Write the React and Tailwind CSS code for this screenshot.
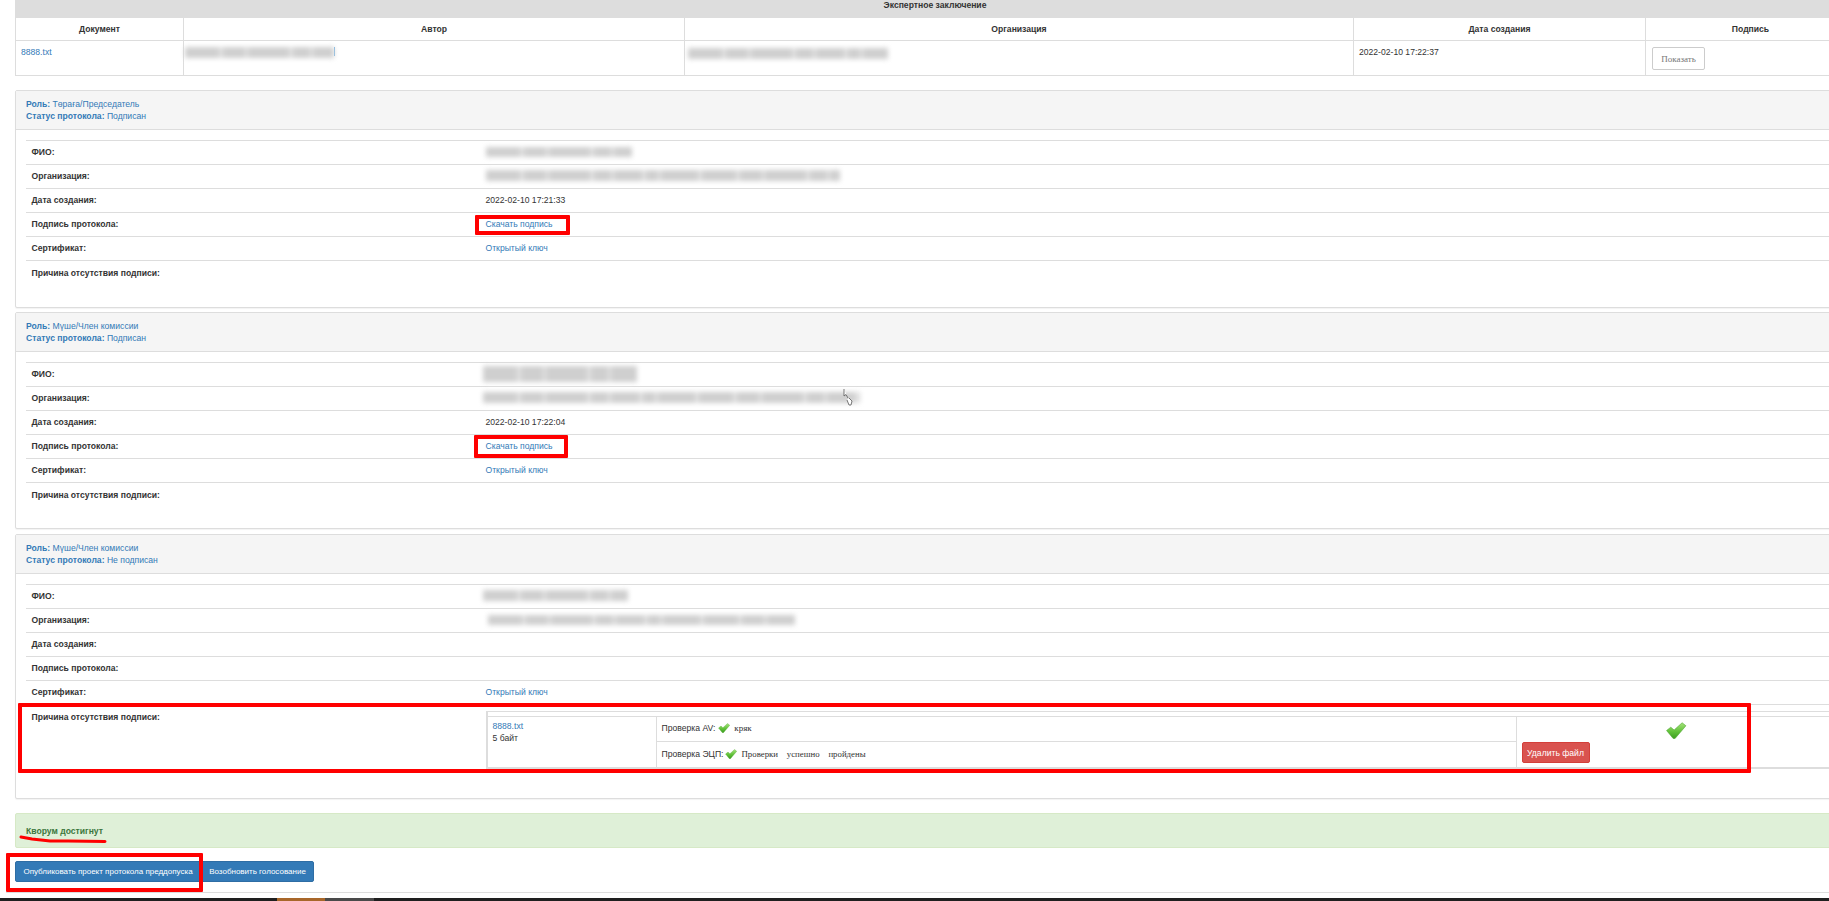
const F = "font-['Liberation_Sans',Arial,sans-serif]";
const S = "font-['Liberation_Serif','Times_New_Roman',serif]";

function Blur({ w, h = 10, className = "" }) {
  const segs = [];
  let left = w, i = 0;
  const pattern = [34, 4, 22, 3, 41, 4, 17, 3, 28, 4, 12, 3, 37, 4];
  while (left > 0) {
    const s = Math.min(pattern[i % pattern.length], left);
    segs.push(s);
    left -= s;
    i++;
  }
  return (
    <div className={"flex overflow-visible blur-[2.4px] " + className} style={{ width: w, height: h }}>
      {segs.map((s, k) => (
        <div key={k} className={k % 2 ? "h-full bg-[#e2e2e2]" : "h-full bg-[#cfcfcf]"} style={{ width: s }} />
      ))}
    </div>
  );
}

function Check({ className = "w-[12px] h-[10px]" }) {
  return (
    <svg viewBox="0 0 22 18" className={className}>
      <defs>
        <linearGradient id="chk" x1="0" y1="0" x2="0" y2="1">
          <stop offset="0" stopColor="#a6e27c" />
          <stop offset="0.55" stopColor="#62c23a" />
          <stop offset="1" stopColor="#3d9e22" />
        </linearGradient>
      </defs>
      <path d="M1 9 L5.5 5.5 L9 8.5 L17.5 0.8 L21.5 4 L10 17.5 L8 17.5 Z" fill="url(#chk)" stroke="#4aa52c" strokeWidth="0.6" strokeLinejoin="round" />
    </svg>
  );
}

function Red({ className }) {
  return <div className={"absolute border-[4px] border-[#f00] rounded-[1px] pointer-events-none " + className} />;
}

function Row({ label, children }) {
  return (
    <div className="grid grid-cols-[454px_1fr] px-[5.5px] pb-[2px] border-t border-[#ddd] h-[24px] items-center">
      <div className="font-bold text-[#333]">{label}</div>
      <div>{children}</div>
    </div>
  );
}

function Panel({ role, status, heightClass, fio, org, date, sign, last }) {
  return (
    <div className={"border border-[#ddd] rounded-[2px] bg-white shadow-[0_1px_1px_rgba(0,0,0,0.05)] " + heightClass}>
      <div className="h-[39px] bg-[#f5f5f5] border-b border-[#ddd] px-[10px] pt-[7px] leading-[12px] text-[#337ab7]">
        <div><span className="font-bold">Роль:</span> {role}</div>
        <div><span className="font-bold">Статус протокола:</span> {status}</div>
      </div>
      <div className="pl-[10px] pt-[10px]">
        <Row label="ФИО:">{fio}</Row>
        <Row label="Организация:">{org}</Row>
        <Row label="Дата создания:"><span className="text-[#333]">{date}</span></Row>
        <Row label="Подпись протокола:">{sign && <a className="text-[#337ab7]">Скачать подпись</a>}</Row>
        <Row label="Сертификат:"><a className="text-[#337ab7]">Открытый ключ</a></Row>
        <div className="grid grid-cols-[454px_1fr] px-[5.5px] border-t border-[#ddd] pt-[6px]">
          <div className="font-bold text-[#333] leading-[12px]">Причина отсутствия подписи:</div>
          <div className="-mt-[6px] pt-[7px]">{last}</div>
        </div>
      </div>
    </div>
  );
}

function FileTable() {
  return (
    <div className="-mt-[1px] border-t border-[#ddd]">
      <div className="h-[5px] border-b border-[#ddd] border-l-2" />
      <div className="grid grid-cols-[169px_860px_1fr] h-[52px] border-l-2 border-b-2 border-[#ddd]">
        <div className="border-r border-[#ddd] pl-[5px] pt-[3px] leading-[12px]">
          <a className="text-[#337ab7] block">8888.txt</a>
          <div className="text-[#333]">5 байт</div>
        </div>
        <div className="border-r border-[#ddd] text-[#333]">
          <div className="h-[25px] border-b border-[#ddd] flex items-center pl-[5px] pb-[3px]">
            <span>Проверка AV:</span>
            <Check className="w-[12px] h-[10px] ml-[3px]" />
            <span className={S + " ml-[4px] text-[9px]"}>кряк</span>
          </div>
          <div className="h-[26px] flex items-center pl-[5px] pb-[2px]">
            <span>Проверка ЭЦП:</span>
            <Check className="w-[12px] h-[10px] ml-[2px]" />
            <span className={S + " ml-[4px] text-[8.8px] whitespace-pre"}>Проверки    успешно    пройдены</span>
          </div>
        </div>
        <div className="pl-[5px]">
          <div className="h-[25px] pt-[5px] pl-[143px]">
            <Check className="w-[22px] h-[17px]" />
          </div>
          <button className="block h-[21px] w-[68px] bg-[#d9534f] border border-[#d43f3a] rounded-[2px] text-white text-center whitespace-nowrap">Удалить файл</button>
        </div>
      </div>
    </div>
  );
}

export default function App() {
  return (
    <div className={F + " relative w-[1829px] h-[901px] overflow-hidden bg-white text-[8.6px] leading-[12px] flex flex-col"}>
      <div className="w-[1870px] pl-[15px] flex flex-col flex-1">
        <div className="w-[1845px]">
          <div className="h-[18px] bg-[#ddd] text-center font-bold text-[#333] leading-[10px] pr-[5px]">Экспертное заключение</div>
          <div className="grid grid-cols-[169px_501px_669px_292px_1fr] h-[23px] border-b border-[#ddd] text-center font-bold text-[#333] items-stretch">
            <div className="border-l border-r border-[#ddd] flex items-center justify-center">Документ</div>
            <div className="border-r border-[#ddd] flex items-center justify-center">Автор</div>
            <div className="border-r border-[#ddd] flex items-center justify-center">Организация</div>
            <div className="border-r border-[#ddd] flex items-center justify-center">Дата создания</div>
            <div className="flex items-center justify-center pr-[5px]">Подпись</div>
          </div>
          <div className="grid grid-cols-[169px_501px_669px_292px_1fr] h-[35px] border-b border-[#ddd]">
            <div className="border-l border-r border-[#ddd] pl-[5px] pt-[5px]"><a className="text-[#337ab7]">8888.txt</a></div>
            <div className="border-r border-[#ddd] pl-[1px] pt-[6px] flex items-start">
              <Blur w={149} h={11} />
              <div className="w-px h-[9px] bg-[#7ab8e8]" />
            </div>
            <div className="border-r border-[#ddd] pl-[3px] pt-[7px]"><Blur w={200} h={11} /></div>
            <div className="border-r border-[#ddd] pl-[5px] pt-[5px] text-[#333]">2022-02-10 17:22:37</div>
            <div className="pl-[6px] pt-[6px]">
              <button className={S + " h-[23px] w-[53px] border border-[#ccc] rounded-[2px] text-[#777] text-[9px]"}>Показать</button>
            </div>
          </div>
        </div>

        <div className="mt-[14px]">
          <Panel
            role="Төрағa/Председатель"
            status="Подписан"
            heightClass="h-[218px] mb-[4px]"
            fio={<Blur w={146} h={10} />}
            org={<Blur w={354} h={11} />}
            date="2022-02-10 17:21:33"
            sign
          />
          <Panel
            role="Мүше/Член комиссии"
            status="Подписан"
            heightClass="h-[217px] mb-[5px]"
            fio={<Blur w={154} h={16} className="-ml-[3px]" />}
            org={<Blur w={377} h={11} className="-ml-[3px]" />}
            date="2022-02-10 17:22:04"
            sign
          />
          <Panel
            role="Мүше/Член комиссии"
            status="Не подписан"
            heightClass="h-[265px]"
            fio={<Blur w={145} h={11} className="-ml-[3px]" />}
            org={<Blur w={307} h={10} className="ml-[2px]" />}
            last={<FileTable />}
          />
        </div>

        <div className="mt-[14px] h-[35px] bg-[#dff0d8] border border-[#d6e9c6] rounded-[2px] flex items-center px-[10px] text-[#3c763d] font-bold">Кворум достигнут</div>

        <div className="mt-[13px] flex h-[21px] text-[8px]">
          <button className="w-[186px] h-[21px] bg-[#337ab7] border border-[#2e6da4] rounded-[2px] text-white text-center whitespace-nowrap">Опубликовать проект протокола преддопуска</button>
          <button className="w-[113px] h-[21px] bg-[#337ab7] border border-[#2e6da4] rounded-[2px] text-white text-center whitespace-nowrap">Возобновить голосование</button>
        </div>
      </div>

      <div className="border-t border-[#ddd] h-[1px] ml-[6px] mb-[5px]" />
      <div className="h-[3px] bg-[#1f1f1f] flex pl-[277px]">
        <div className="w-[48px] bg-[#a8672a]" />
        <div className="w-[49px] bg-[#4a4a4a]" />
      </div>

      <Red className="left-[475px] top-[215px] w-[95px] h-[20px]" />
      <Red className="left-[474px] top-[435px] w-[94px] h-[23px]" />
      <Red className="left-[18px] top-[703px] w-[1733px] h-[70px]" />
      <Red className="left-[6px] top-[853px] w-[197px] h-[39px]" />
      <svg className="absolute left-[18px] top-[834px] w-[90px] h-[12px] pointer-events-none" viewBox="0 0 90 12">
        <path d="M3 3 L14 5 L32 7 L50 7 L87 7.5" stroke="#f00" strokeWidth="3" fill="none" strokeLinecap="round" />
      </svg>
      <svg className="absolute left-[843px] top-[388px] w-[10px] h-[19px] pointer-events-none" viewBox="0 0 10 19">
        <path d="M1 1 L1 8 L3 6.5 L5 10 M4 12 L6 17 L8 17 L9 13 L6 10" stroke="#555" strokeWidth="0.8" fill="#fff" />
      </svg>
    </div>
  );
}
